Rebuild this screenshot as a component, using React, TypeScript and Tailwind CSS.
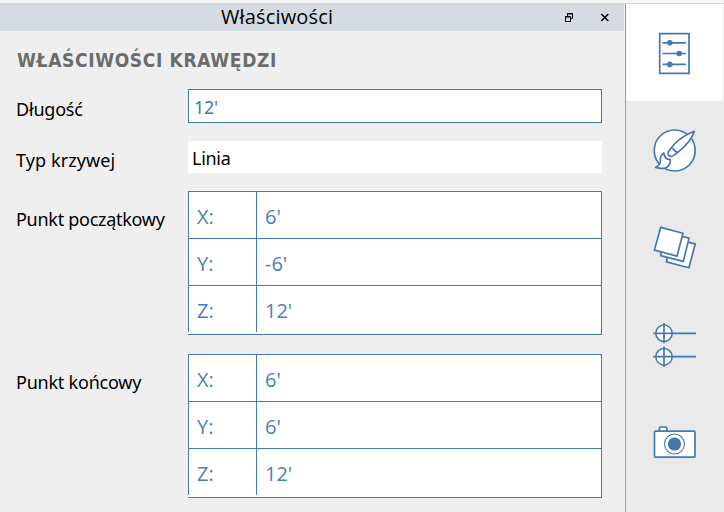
import type { ReactNode } from "react";

const BLUE = "#4478b0";

type Axis = { axis: string; value: string };

function PointTable({ rows }: { rows: Axis[] }) {
  return (
    <div className="h-[144px] w-[414px] border-y border-r border-[#4478b0] bg-white font-['Open_Sans',sans-serif] text-[20px] leading-[46px] text-[#4a7fb8]">
      {rows.map(({ axis, value }, i) => (
        <div
          key={axis}
          className={`flex border-[#4478b0] ${i < 2 ? "h-[47px] border-b" : "h-[46px]"}`}
        >
          <div className="w-[69px] border-x border-[#4478b0] pt-[2px] pl-2">{axis}:</div>
          <div className="pt-[2px] pl-2">{value}</div>
        </div>
      ))}
    </div>
  );
}

function Tab({ top, active, children }: { top: number; active?: boolean; children: ReactNode }) {
  return (
    <button className={`block h-[97px] w-[97px] ${active ? "bg-white" : ""}`}>
      <svg
        width="97"
        height="97"
        viewBox={`626 ${top} 97 97`}
        fill="none"
        stroke={BLUE}
        strokeWidth="1.7"
      >
        {children}
      </svg>
    </button>
  );
}

export default function App() {
  return (
    <div className="flex h-[512px] w-[724px] flex-col overflow-hidden bg-[#efefef] font-['Noto_Sans',sans-serif] text-black">
      <div className="h-1 shrink-0 border-b border-[#d8d8d8] bg-[#f5f5f5]" />
      <div className="flex h-[508px]">
        <main className="w-[625px]">
          <header className="flex h-[27px] w-[624px] bg-[#d6dae1]">
            <h1 className="w-[563px] pl-[221px] font-['Open_Sans',sans-serif] text-[20px] leading-[25px] tracking-[0.15px]">
              Właściwości
            </h1>
            <svg width="11" height="27" viewBox="563 4 11 27" fill="none" stroke="#000">
              <path d="M567.5 16v-2.5h5v5H571M567 14h6" />
              <path d="M565.5 16.5h5v5h-5zM565 17h6" />
            </svg>
            <svg width="35" height="27" viewBox="574 4 35 27" fill="none" stroke="#000" strokeWidth="1.5">
              <path d="m601.3 14 7 7m0-7-7 7" />
            </svg>
          </header>
          <h2 className="h-[58px] pt-[15px] pl-[17px] font-['DejaVu_Sans_Condensed','DejaVu_Sans',sans-serif] text-[19px] leading-[28px] font-bold tracking-[0.65px] font-stretch-condensed text-[#6b6b6b]">
            WŁAŚCIWOŚCI KRAWĘDZI
          </h2>
          <div className="flex h-[52px]">
            <label className="w-[188px] pt-[7px] pl-4 text-[18px] leading-[26px] tracking-[-0.2px]">Długość</label>
            <div className="h-[34px] w-[414px] border border-[#4478b0] bg-white pl-[5px] text-[18px] leading-[34px] tracking-[-0.3px] text-[#4478b0]">
              12'
            </div>
          </div>
          <div className="flex h-[50px]">
            <label className="w-[188px] pt-[6px] pl-4 text-[18px] leading-[26px] tracking-[0.1px]">Typ krzywej</label>
            <div className="h-8 w-[414px] bg-white pl-1 text-[18px] leading-[34px] tracking-[-0.3px]">Linia</div>
          </div>
          <div className="flex h-[163px]">
            <label className="w-[188px] pt-[15px] pl-4 text-[18px] leading-[26px] tracking-[-0.28px]">Punkt początkowy</label>
            <PointTable
              rows={[
                { axis: "X", value: "6'" },
                { axis: "Y", value: "-6'" },
                { axis: "Z", value: "12'" },
              ]}
            />
          </div>
          <div className="flex">
            <label className="w-[188px] pt-[15px] pl-4 text-[18px] leading-[26px] tracking-[-0.22px]">Punkt końcowy</label>
            <PointTable
              rows={[
                { axis: "X", value: "6'" },
                { axis: "Y", value: "6'" },
                { axis: "Z", value: "12'" },
              ]}
            />
          </div>
        </main>
        <nav className="w-[99px] border-l border-[#9b9b9b] bg-[#eaeaea]">
          <Tab top={4} active>
            <path d="M659.7 33.7h29.3v39.6h-29.3z" />
            <path d="M662.5 42.8h23.5M662.5 53.5h23.5M662.5 64.4h23.5" />
            <g fill={BLUE} stroke="none">
              <circle cx="669.8" cy="42.8" r="2.8" />
              <circle cx="679.2" cy="53.5" r="2.8" />
              <circle cx="669.8" cy="64.4" r="2.8" />
            </g>
          </Tab>
          <Tab top={101}>
            <circle cx="674.7" cy="150.5" r="20.5" fill="#fff" />
            <path
              fill="#fff"
              strokeLinejoin="round"
              d="M694.3 131.3C687 134 680 138.500 674.500 144l-6 7.500c-1.500 2.500.4 5 3 4.800 1.200 0 2.200-.6 3-1.500l4.500-3.500c6.500-5 12.500-11.500 15.300-20zM672.500 148.500l4.500 4"
            />
            <path
              fill="#fff"
              strokeLinejoin="round"
              d="M663.8 152.8c-2.8 2.2-4 4.8-3.3 7.8.2 3-1.8 5.2-5 6.8 5.2 1.4 11.5 1.6 13.5-2.600 1.7-1.5 1.2-3 1.3-5.3-3.5 0-6-1.8-6.5-6.7z"
            />
          </Tab>
          <Tab top={198}>
            <g fill="#fff">
              <path d="m672.2 238.3 23 5.6-6.3 23.9-22.500-6z" />
              <path d="m666.2 232.5 22.8 5.7-5.7 23.2-22.7-5.8z" />
              <path d="m660.7 227.4 22.3 5.9-6 22.8-22.6-6z" />
            </g>
          </Tab>
          <Tab top={295}>
            <circle cx="664" cy="333.3" r="8.2" fill="#fff" strokeWidth="1.5" />
            <circle cx="664" cy="356.7" r="8.2" fill="#fff" strokeWidth="1.5" />
            <path d="M653.3 333.4H696M653.3 356.7H696M664 323v20.5M664 346.5V367" />
          </Tab>
          <Tab top={392}>
            <path fill="#fff" d="M659.5 431v-3.2l1-.8h5.4l1 .8v3.2" />
            <rect x="654.5" y="431.2" width="40.5" height="26" rx="1" fill="#fff" />
            <circle cx="674.5" cy="444" r="10" strokeWidth="1.1" />
            <circle cx="674.5" cy="444" r="6.6" fill={BLUE} stroke="none" />
          </Tab>
        </nav>
      </div>
    </div>
  );
}
